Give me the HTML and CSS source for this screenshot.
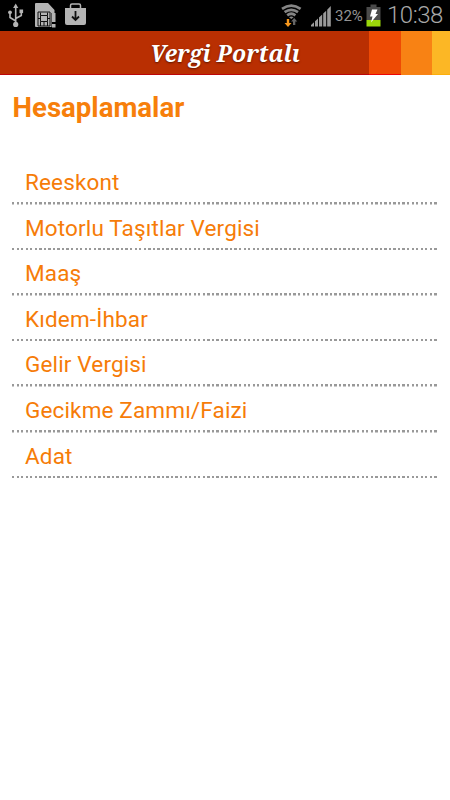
FILE: index.html
```html
<!DOCTYPE html>
<html lang="tr">
<head>
    <meta charset="UTF-8">
    <meta name="viewport" content="width=device-width, initial-scale=1.0">
    <title>Vergi Portalı</title>
    <link rel="stylesheet" href="styles.css">
</head>
<body>
    <div class="status-bar">
        <svg class="status-icons" width="100" height="31" viewBox="0 0 100 31">
            <!-- usb -->
            <g fill="none" stroke="#b4b4b4" stroke-width="1.6">
                <path d="M15.7 7v16M15.7 21L10 17.5v-5M15.7 18.500L21.3 15.500v-4"/>
            </g>
            <g fill="#b4b4b4">
                <path d="M15.7 3.5l2.6 4.5h-5.2z"/>
                <circle cx="10" cy="12.3" r="1.9"/>
                <path d="M19.5 9.500h3.6v3.6h-3.6z"/>
                <circle cx="15.7" cy="24.4" r="2.6"/>
            </g>
            <!-- sim card -->
            <path d="M36 3h12l6.500 7v3h-3v14H36q-1 0-1-1V4q0-1 1-1z" fill="#b4b4b4"/>
            <path d="M38 12h12v14H38z" fill="#b4b4b4" stroke="#111" stroke-width="1"/>
            <path d="M40.500 12.500v3h7v-3M40.500 15.500v6h7v-6M38 18.500h2.500M47.500 18.500H50M40.500 21.500V26M44 21.500V26M47.500 21.500V26" fill="none" stroke="#111" stroke-width="1"/>
            <path d="M52 13h3.500v9H52zM52 24h3.500v3.500H52z" fill="#b4b4b4"/>
            <!-- shopping bag -->
            <path d="M65 8h21v15q0 2-2 2H67q-2 0-2-2z" fill="#b4b4b4"/>
            <path d="M70.500 8V5.500q0-1.500 1.500-1.500h7q1.500 0 1.500 1.500V8" fill="none" stroke="#b4b4b4" stroke-width="1.500"/>
            <path d="M75.500 11v9M72 16.500l3.500 3.500 3.500-3.500" fill="none" stroke="#111" stroke-width="1.800"/>
        </svg>
        <div class="status-right">
            <svg width="53" height="31" viewBox="0 0 53 31">
                <!-- wifi -->
                <g fill="none" stroke="#858585" stroke-width="2.700">
                    <path d="M3 8.800Q12.300 2.300 21.600 8.800"/>
                    <path d="M5.600 12.200Q12.300 7.400 19 12.200"/>
                    <path d="M8.200 15.300Q12.300 12.200 16.400 15.300"/>
                </g>
                <path d="M10 17.300q2.300-1.400 4.600 0L12.300 19z" fill="#858585"/>
                <path d="M10.200 19v4h2.300L9 27l-3.500-4h2.300v-4z" fill="#f7981d"/>
                <path d="M14 25v-3.500h-1.800l3-3.500 3 3.500H16.300V25z" fill="#666"/>
                <!-- signal -->
                <path d="M32 26.500V25l3-2.700v4.200zM36 26.500v-5.200l3-2.800v8zM40 26.500v-9l3.200-3v12zM44.200 26.500V13.500l3-2.800v15.800zM48.200 26.500V9.800L51.800 6v20.500z" fill="#999"/>
            </svg>
            <span class="battery-level">32%</span>
            <svg class="battery" width="15" height="31" viewBox="0 0 15 31">
                <path d="M4.500 4.500h6V7h4v13H.5V7h4z" fill="#4b4b4b"/>
                <path d="M.500 20h14v6.500H.500z" fill="#9bd80a"/>
                <path d="M6 9.500h5.500L9.500 14H12l-7 8.500 1.500-6H4z" fill="#fff"/>
            </svg>
            <span class="clock">10:38</span>
        </div>
    </div>

    <div class="header">
        <div class="stripe-red"></div>
        <div class="stripe-orange"></div>
        <div class="stripe-yellow"></div>
        <div class="header-title">Vergi Portalı</div>
    </div>

    <div class="content">
        <h1>Hesaplamalar</h1>
        <ul class="menu">
            <li>Reeskont</li>
            <li>Motorlu Taşıtlar Vergisi</li>
            <li>Maaş</li>
            <li>Kıdem-İhbar</li>
            <li>Gelir Vergisi</li>
            <li>Gecikme Zammı/Faizi</li>
            <li>Adat</li>
        </ul>
    </div>
</body>
</html>
```
FILE: styles.css
```css
body {
    margin: 0;
    padding: 0;
    font-family: Roboto, sans-serif;
    background-color: #fff;
}
.status-bar {
    display: flex;
    justify-content: space-between;
    height: 31px;
    background-color: #000;
    color: #949494;
}
.status-right {
    display: flex;
    line-height: 31px;
    width: 171px;
}
.status-right svg { flex: none; }
.battery-level { font-size: 15px; width: 33px; padding-left: 3px; padding-top: 1px; box-sizing: border-box; flex: none; }
.clock { font-size: 24px; font-weight: 300; margin-left: 6px; letter-spacing: -0.5px; color: #a8a8a8; }
.battery { margin-left: 1px; }
.header {
    position: relative;
    display: flex;
    justify-content: flex-end;
    height: 44px;
    background-color: #b92f02;
    box-shadow: inset 0 -1px #bd0508;
}
.stripe-red { width: 32px; background-color: #ee4a04; box-shadow: inset 0 -1px #ee0505; }
.stripe-orange { width: 31px; background-color: #f88214; }
.stripe-yellow { width: 18px; background-color: #fcb725; box-shadow: inset 0 -1px #fcaf0c; }
.header-title {
    position: absolute;
    left: 0;
    right: 0;
    top: 0;
    line-height: 44px;
    text-align: center;
    font-family: "Noto Serif", "Droid Serif", "DejaVu Serif Condensed", "DejaVu Serif", serif;
    font-size: 23px;
    font-weight: bold;
    font-style: italic;
    color: #fff;
    text-shadow: 0 1px 2px #5a1500;
}
.content { padding: 15px 12px 0; }
.content h1 {
    margin: 0;
    font-size: 27.600px;
    line-height: 36px;
    font-weight: bold;
    color: #f77f0b;
    padding-left: 0.5px;
}
.menu { list-style: none; margin: 33px 0 0; padding: 0; }
.menu li {
    height: 45.600px;
    padding-left: 13px;
    box-sizing: border-box;
    font-size: 22.500px;
    line-height: 47px;
    letter-spacing: 0.150px;
    color: #f67c08;
    background-image: repeating-linear-gradient(to right, #999 0, #999 2.300px, #fff 2.300px, #fff 4.540px);
    background-size: 426px 2.500px;
    background-position: 0 100%;
    background-repeat: no-repeat;
}
```
